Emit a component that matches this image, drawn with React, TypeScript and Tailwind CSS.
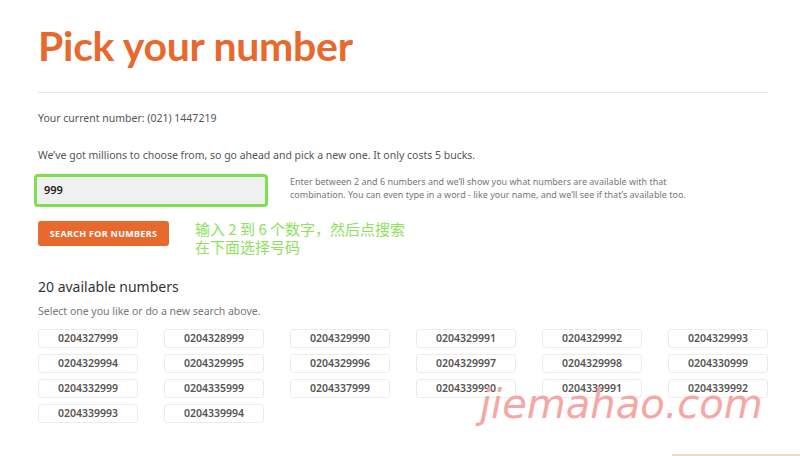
import React from 'react';

const numbers = [
  '0204327999', '0204328999', '0204329990', '0204329991', '0204329992', '0204329993',
  '0204329994', '0204329995', '0204329996', '0204329997', '0204329998', '0204330999',
  '0204332999', '0204335999', '0204337999', '0204339990', '0204339991', '0204339992',
  '0204339993', '0204339994',
];

const sans = { fontFamily: '"Noto Sans", "Open Sans", sans-serif' };

export default function App() {
  return (
    <div className="relative w-[800px] h-[456px] overflow-hidden bg-white" style={sans}>
      <div className="px-[38px] pt-[23px] w-[800px]">
        <div className="w-[730px]">
          <h1
            className="text-[41px] leading-[45px] font-bold text-[#e8692e] tracking-[-0.3px]"
            style={{ fontFamily: 'Lato, "Noto Sans", sans-serif' }}
          >
            Pick your number
          </h1>
          <div className="mt-[24px] h-px bg-[#e6e6e6]" />

          <p className="mt-[18px] text-[10.5px] leading-[14px] text-[#555]">Your current number: (021) 1447219</p>
          <p className="mt-[23px] text-[10.5px] leading-[14px] text-[#555]">
            We’ve got millions to choose from, so go ahead and pick a new one. It only costs 5 bucks.
          </p>

          <div className="mt-[12px] flex items-start">
            <div className="-ml-[4px] w-[234px] h-[33px] rounded-[4px] border-[3px] border-[#7fe04f] bg-[#f0f0f0] flex items-center px-[7px] text-[11px] text-[#222] font-semibold">
              999
            </div>
            <p className="ml-[22px] mt-[1px] w-[405px] text-[9px] leading-[13px] text-[#777]">
              Enter between 2 and 6 numbers and we’ll show you what numbers are available with that combination. You can even type in a word - like your name, and we’ll see if that’s available too.
            </p>
          </div>

          <div className="mt-[14px] flex items-start">
            <button className="w-[131px] h-[25px] rounded-[3px] bg-[#e8692e] text-white text-[9px] font-bold tracking-[0.3px]">
              SEARCH FOR NUMBERS
            </button>
            <div
              className="ml-[26px] -mt-[1px] text-[15px] leading-[18px] text-[#8ee05e]"
              style={{ fontFamily: '"Noto Sans CJK SC", sans-serif' }}
            >
              <div>输入 2 到 6 个数字，然后点搜索</div>
              <div>在下面选择号码</div>
            </div>
          </div>

          <h2 className="mt-[22px] text-[14px] leading-[18px] text-[#333]">20 available numbers</h2>
          <p className="mt-[8px] text-[10.5px] leading-[14px] text-[#777]">Select one you like or do a new search above.</p>

          <div className="mt-[11px] grid grid-cols-6 gap-x-[26px] gap-y-[6px]">
            {numbers.map((n) => (
              <div
                key={n}
                className="h-[19px] rounded-[3px] border border-[#ececec] flex items-center justify-center text-[10.5px] font-semibold text-[#555]"
              >
                {n}
              </div>
            ))}
          </div>
        </div>
      </div>

      <div
        className="absolute left-[480px] top-[376px] text-[40px] leading-[56px] text-[#f7a6a6] italic"
        style={{ fontFamily: '"DejaVu Sans", sans-serif' }}
      >
        jiemahao.com
      </div>
      <div className="absolute left-[672px] bottom-0 w-[128px] h-[2px] bg-[#eadccb]" />
    </div>
  );
}
